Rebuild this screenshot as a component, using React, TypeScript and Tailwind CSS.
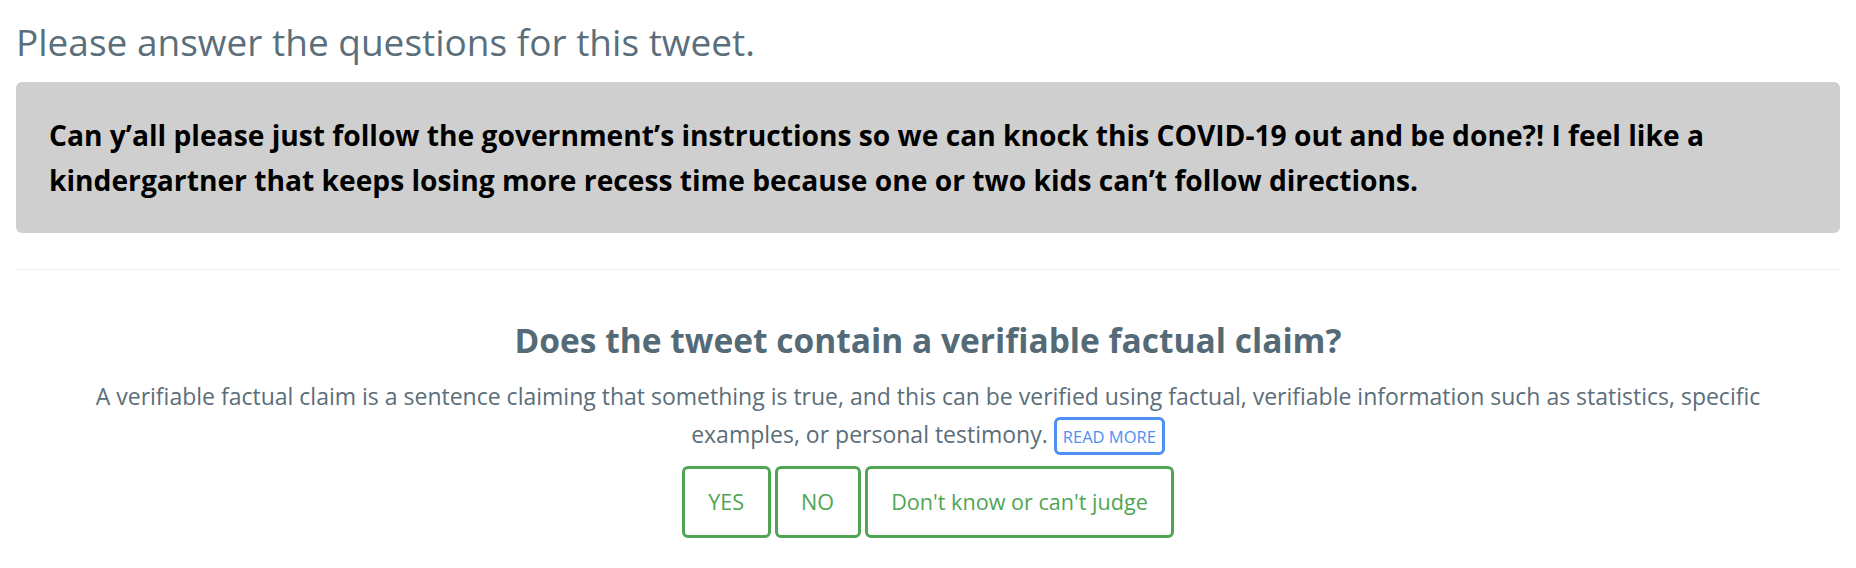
import React from "react";

export default function App() {
  const font = { fontFamily: "'Open Sans', 'Noto Sans', sans-serif" };
  return (
    <div className="w-[1856px] h-[568px] bg-white px-[16px] overflow-hidden" style={font}>
      <h1 className="mt-[20px] text-[37px] leading-[43px] font-normal text-[#5a6f7b]">
        Please answer the questions for this tweet.
      </h1>
      <div className="mt-[19px] rounded-[6px] bg-[#cfcfcf] pl-[33px] pr-[20px] pt-[31px] pb-[30px]">
        <p className="text-[28.2px] leading-[45px] font-bold text-black">
          Can y’all please just follow the government’s instructions so we can knock this COVID-19 out and be done?! I feel like a kindergartner that keeps losing more recess time because one or two kids can’t follow directions.
        </p>
      </div>
      <hr className="mt-[36px] border-0 border-t border-[#efefef]" />
      <div className="mt-[51px] flex flex-col items-center">
        <h2 className="text-[33.5px] leading-[38px] font-bold text-[#546b77]">
          Does the tweet contain a verifiable factual claim?
        </h2>
        <p className="mt-[18px] max-w-[1710px] text-center text-[23px] leading-[38px] text-[#5b6e79]">
          A verifiable factual claim is a sentence claiming that something is true, and this can be verified using factual, verifiable information such as statistics, specific examples, or personal testimony.{" "}
          <span className="inline-block rounded-[6px] border-[3px] border-[#4d8ff2] px-[6px] pt-[7px] pb-[5px] text-[16.5px] leading-[20px] text-[#4d8ff2] uppercase">
            Read more
          </span>
        </p>
        <div className="mt-[11px] flex gap-[4px]">
          {["YES", "NO", "Don't know or can't judge"].map((t) => (
            <button
              key={t}
              className="h-[72px] rounded-[6px] border-[3px] border-[#4fa552] bg-white px-[23.5px] text-[21.6px] text-[#4fa552]"
            >
              {t}
            </button>
          ))}
        </div>
      </div>
    </div>
  );
}
